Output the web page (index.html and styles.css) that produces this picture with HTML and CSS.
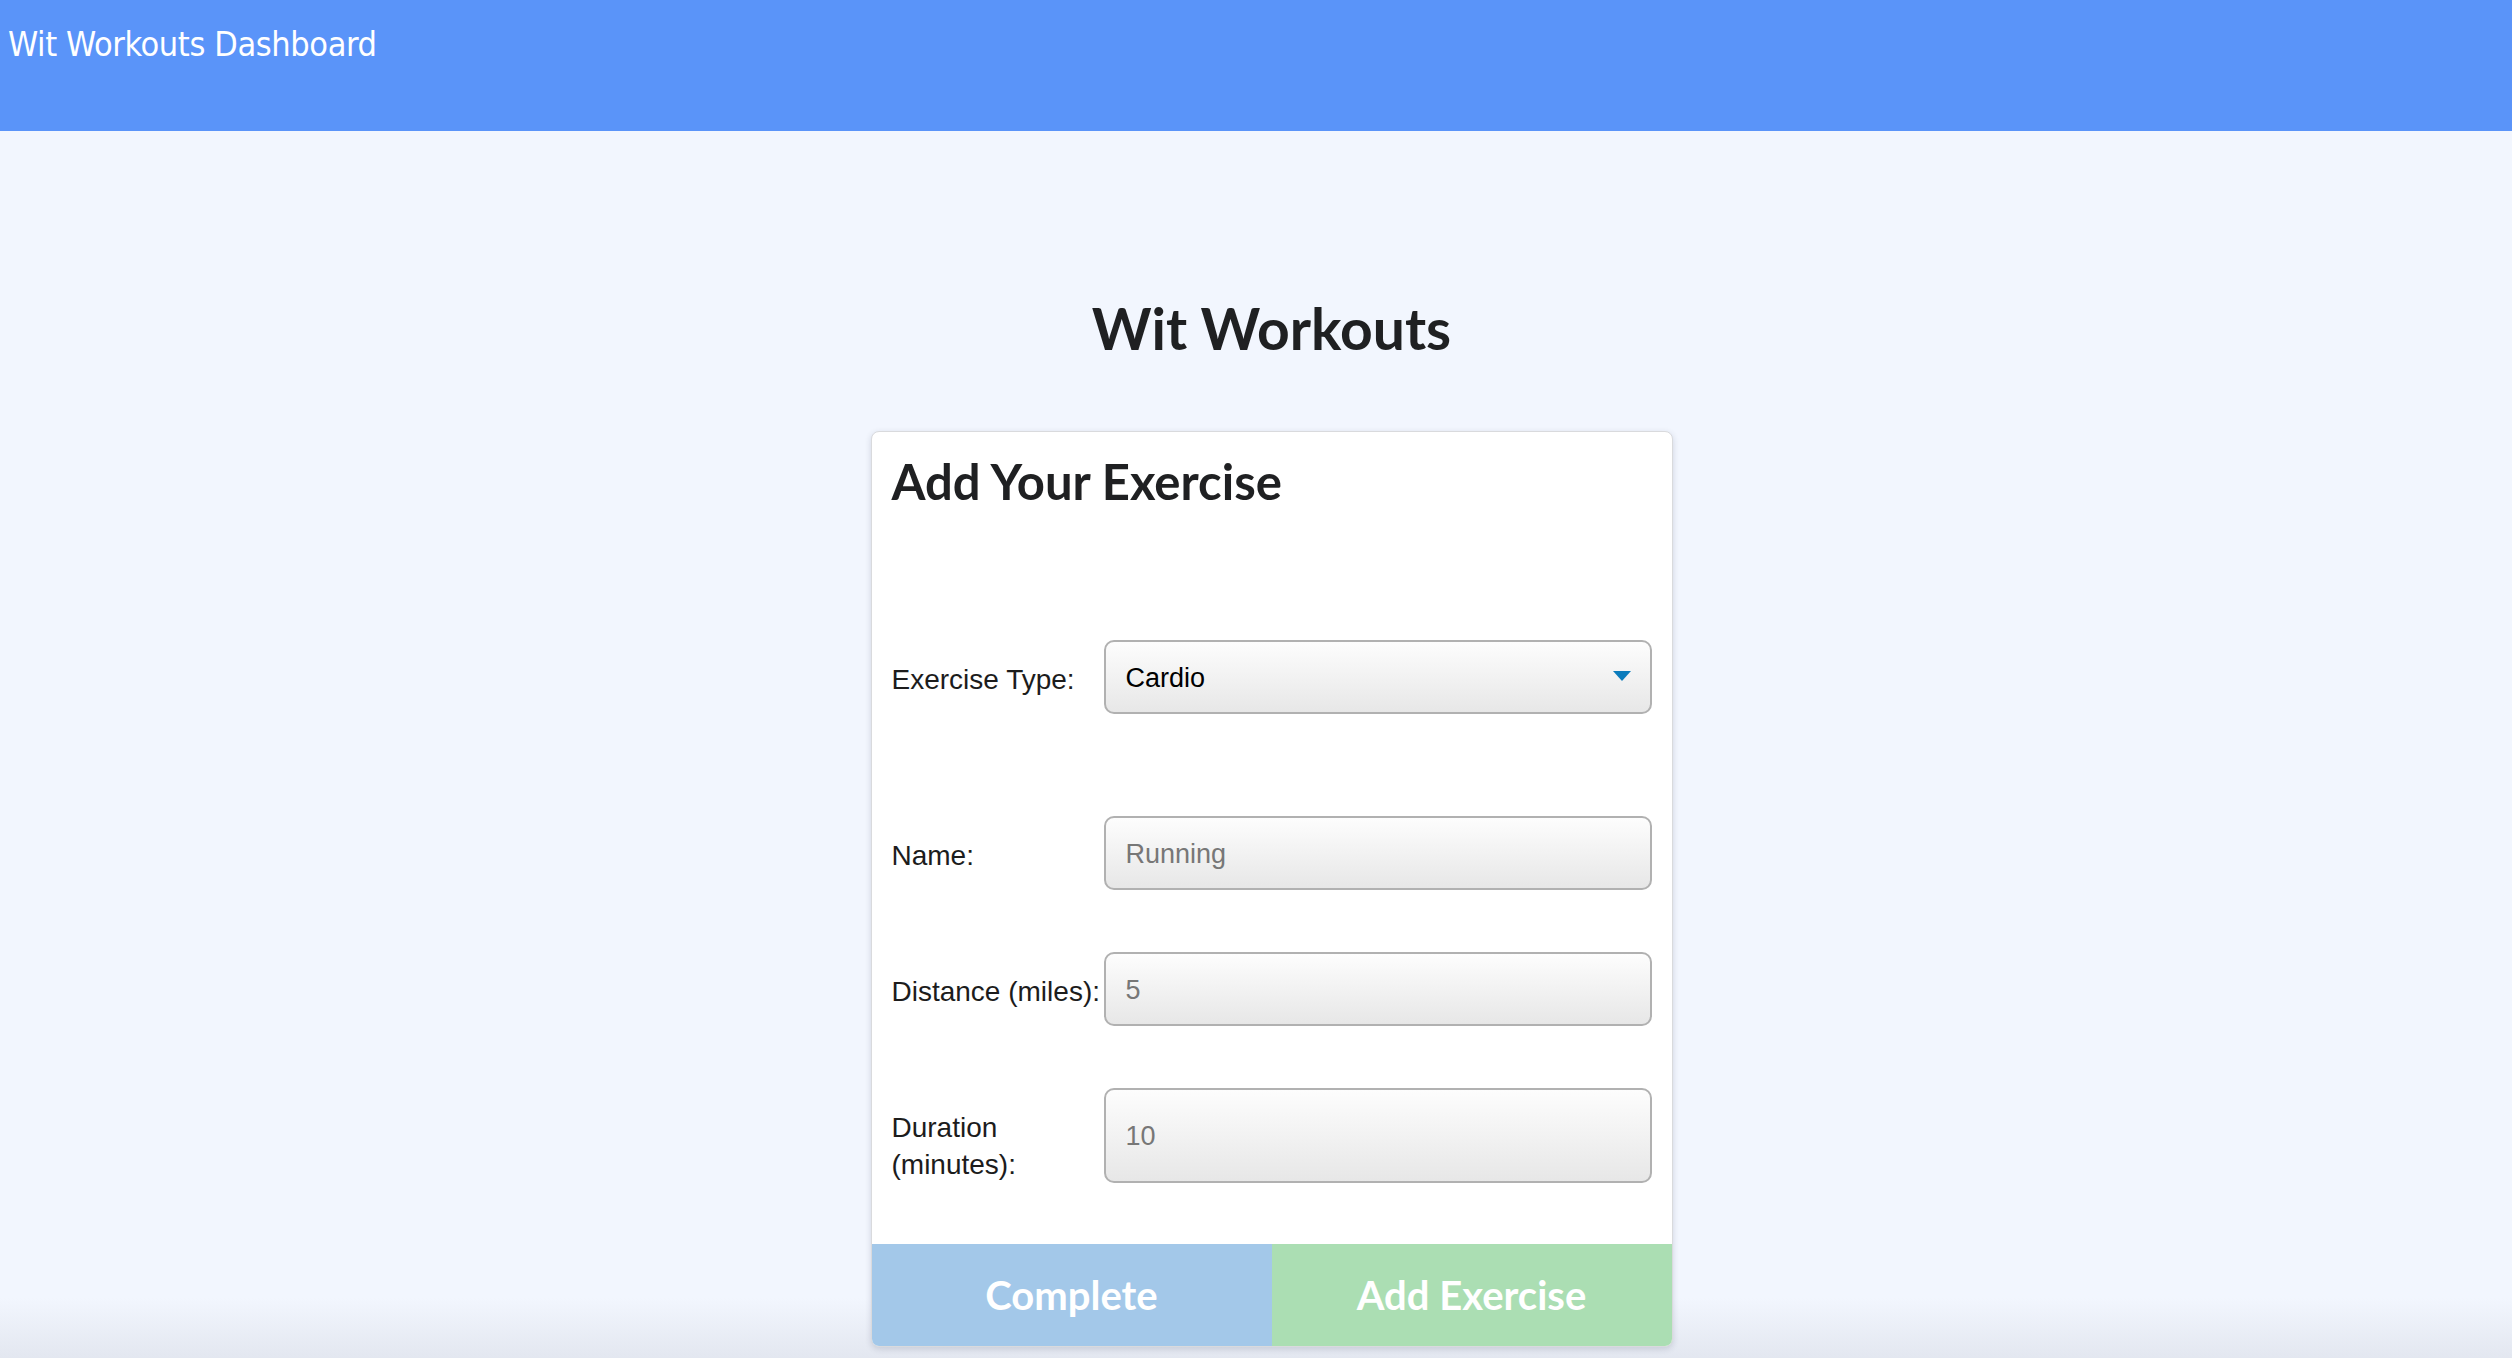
FILE: index.html
```html
<!DOCTYPE html>
<html lang="en">
<head>
<meta charset="utf-8">
<title>Wit Workouts Dashboard</title>
<link rel="stylesheet" href="styles.css">
</head>
<body>
<header class="topbar">
  <span class="brand">Wit Workouts Dashboard</span>
</header>
<main class="main">
  <h1 class="title">Wit Workouts</h1>
  <section class="card">
    <div class="card-body">
      <h2 class="card-title">Add Your Exercise</h2>
      <form class="form">
        <div class="row row-type">
          <label class="label" for="type">Exercise Type:</label>
          <div class="select-wrap">
            <select id="type" class="field select">
              <option>Cardio</option>
              <option>Strength</option>
            </select>
            <svg class="caret" width="18" height="10" viewBox="0 0 18 10"><path d="M0 0H18L9 10Z" fill="#0b7cbc"/></svg>
          </div>
        </div>
        <div class="row">
          <label class="label" for="name">Name:</label>
          <input id="name" class="field" type="text" placeholder="Running">
        </div>
        <div class="row">
          <label class="label" for="distance">Distance (miles):</label>
          <input id="distance" class="field" type="text" placeholder="5">
        </div>
        <div class="row row-tall">
          <label class="label" for="duration">Duration (minutes):</label>
          <input id="duration" class="field field-tall" type="text" placeholder="10">
        </div>
      </form>
    </div>
    <div class="actions">
      <button class="btn btn-complete" type="button">Complete</button>
      <button class="btn btn-add" type="button">Add Exercise</button>
    </div>
  </section>
</main>
</body>
</html>
```

FILE: styles.css
```css
html {
  min-height: 100%;
  background: linear-gradient(to bottom, #f2f6fe 0, #f2f6fe calc(100% - 60px), #e3e7f0 100%);
}
body {
  margin: 0;
  min-height: 1358px;
  font-family: "Liberation Sans", Arial, sans-serif;
  color: #1c1c1c;
}
.topbar {
  height: 131px;
  box-sizing: border-box;
  background: #5a94f9;
  padding: 24px 0 0 8px;
}
.brand {
  font-family: "DejaVu Sans Condensed", "DejaVu Sans", sans-serif;
  font-stretch: condensed;
  font-size: 34px;
  letter-spacing: -0.4px;
  color: #ffffff;
}
.main {
  display: flex;
  flex-direction: column;
  align-items: center;
  padding-left: 31px;
}
.title {
  margin: 163px 0 0;
  font-family: Lato, sans-serif;
  font-weight: 700;
  font-size: 57px;
  line-height: 1.2;
  color: #1f2022;
}
.card {
  margin-top: 69px;
  width: 802px;
  box-sizing: border-box;
  background: #ffffff;
  border: 1px solid #d9dadd;
  border-radius: 8px;
  box-shadow: 0 2px 6px rgba(30, 40, 70, 0.16);
  overflow: hidden;
}
.card-body {
  padding: 20px 20px 61px;
}
.card-title {
  margin: 0;
  font-family: Lato, sans-serif;
  font-weight: 700;
  font-size: 49px;
  line-height: 1.2;
  color: #1f2022;
}
.form {
  margin-top: 129px;
  display: flex;
  flex-direction: column;
}
.row {
  display: flex;
  align-items: center;
  margin-top: 62px;
}
.row-type {
  margin-top: 0;
  margin-bottom: 40px;
}
.label {
  width: 212px;
  flex: none;
  padding-top: 4px;
  font-size: 28px;
  line-height: 37px;
  color: #1c1c1c;
}
.row-tall .label {
  padding-top: 21px;
}
.select-wrap {
  position: relative;
  flex: 1;
  display: flex;
}
.field {
  flex: 1;
  min-width: 0;
  height: 74px;
  box-sizing: border-box;
  border: 2px solid #b1b1b1;
  border-radius: 10px;
  background: linear-gradient(to bottom, #fdfdfd, #e7e7e7);
  padding: 2px 20px 0;
  font-family: "Liberation Sans", Arial, sans-serif;
  font-size: 27px;
  color: #000000;
  outline: none;
}
.field::placeholder {
  color: #777777;
  opacity: 1;
}
.field-tall {
  height: 95px;
}
.select {
  -webkit-appearance: none;
  appearance: none;
  width: 100%;
}
.caret {
  position: absolute;
  right: 21px;
  top: 31px;
  pointer-events: none;
}
.actions {
  display: flex;
  height: 102px;
}
.btn {
  flex: 1;
  border: 0;
  margin: 0;
  font-family: Lato, sans-serif;
  font-weight: 700;
  font-size: 40px;
  color: #ffffff;
  cursor: pointer;
}
.btn-complete {
  background: #a3c8e9;
}
.btn-add {
  background: #abdeb3;
}
```
